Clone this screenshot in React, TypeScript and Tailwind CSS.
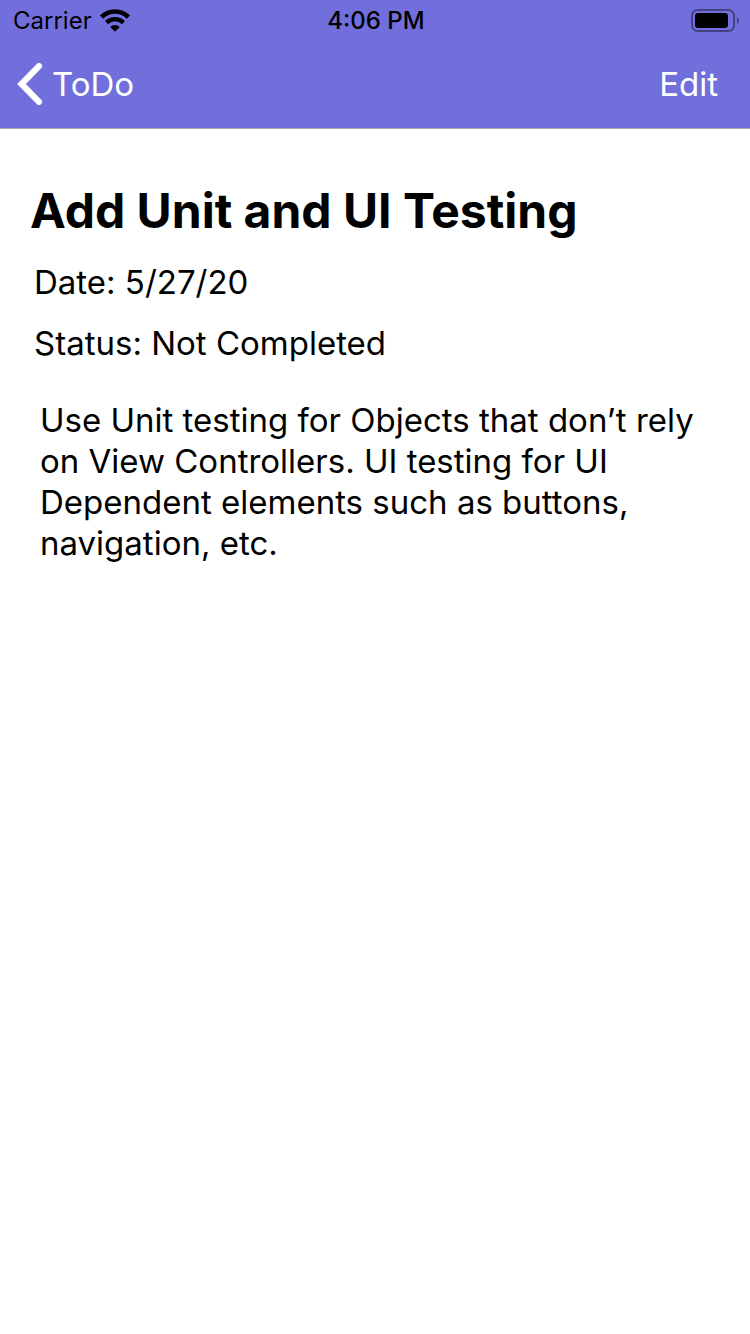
export default function App() {
  return (
    <div className="min-h-screen bg-white text-black font-['Inter',sans-serif]">
      <header className="border-b border-[#a7a7ab] bg-[#716fdb]">
        <div className="grid h-10 grid-cols-3 items-center pl-[13px] pr-[11px] text-2xl leading-10">
          <div className="flex items-center gap-2">
            <span className="pt-px">Carrier</span>
            <svg className="h-6 w-[30px]" viewBox="0 0 30 24" fill="none" aria-hidden="true">
              <path d="M1.600 8a19 19 0 0 1 26.800 0" stroke="#000" strokeWidth="4.600" />
              <path d="M6.600 13.600a11.900 11.900 0 0 1 16.800 0" stroke="#000" strokeWidth="4.400" />
              <path d="M15 22.800l-4.800-4.800a6.800 6.800 0 0 1 9.600 0z" fill="#000" />
            </svg>
          </div>
          <span className="pt-px text-center font-medium">4:06 PM</span>
          <svg className="h-6 w-12 justify-self-end" viewBox="0 0 48 24" fill="none" aria-hidden="true">
            <rect x="1" y="1" width="42" height="21" rx="5.5" stroke="#000" strokeOpacity=".4" strokeWidth="2" />
            <rect x="4" y="4" width="33" height="15" rx="3" fill="#000" />
            <path d="M46 8v7q2-1 2-3.500T46 8z" fill="#000" fillOpacity=".4" />
          </svg>
        </div>
        <nav className="flex h-[88px] items-center justify-between pl-4 pr-8 text-[33px] text-white">
          <button type="button" className="flex items-center gap-2">
            <svg className="h-[42px] w-7" viewBox="0 0 28 42" fill="none" aria-hidden="true">
              <path d="M23 3.200L5.500 21 23 38.800" stroke="#fff" strokeWidth="6.200" strokeLinecap="round" />
            </svg>
            <span className="pt-0.5">ToDo</span>
          </button>
          <button type="button" className="pt-0.5">Edit</button>
        </nav>
      </header>
      <main className="px-[30px] pt-[52px]">
        <h1 className="text-5xl leading-[60px] font-bold">Add Unit and UI Testing</h1>
        <p className="mt-[21px] pl-1 text-[33px] leading-10">Date: 5/27/20</p>
        <p className="mt-[21px] pl-1 text-[33px] leading-10">Status: Not Completed</p>
        <p className="mt-[37px] pl-[10px] text-[33px] leading-[41px]">
          Use Unit testing for Objects that don’t rely on View Controllers. UI testing for UI Dependent elements such as buttons, navigation, etc.
        </p>
      </main>
    </div>
  );
}
